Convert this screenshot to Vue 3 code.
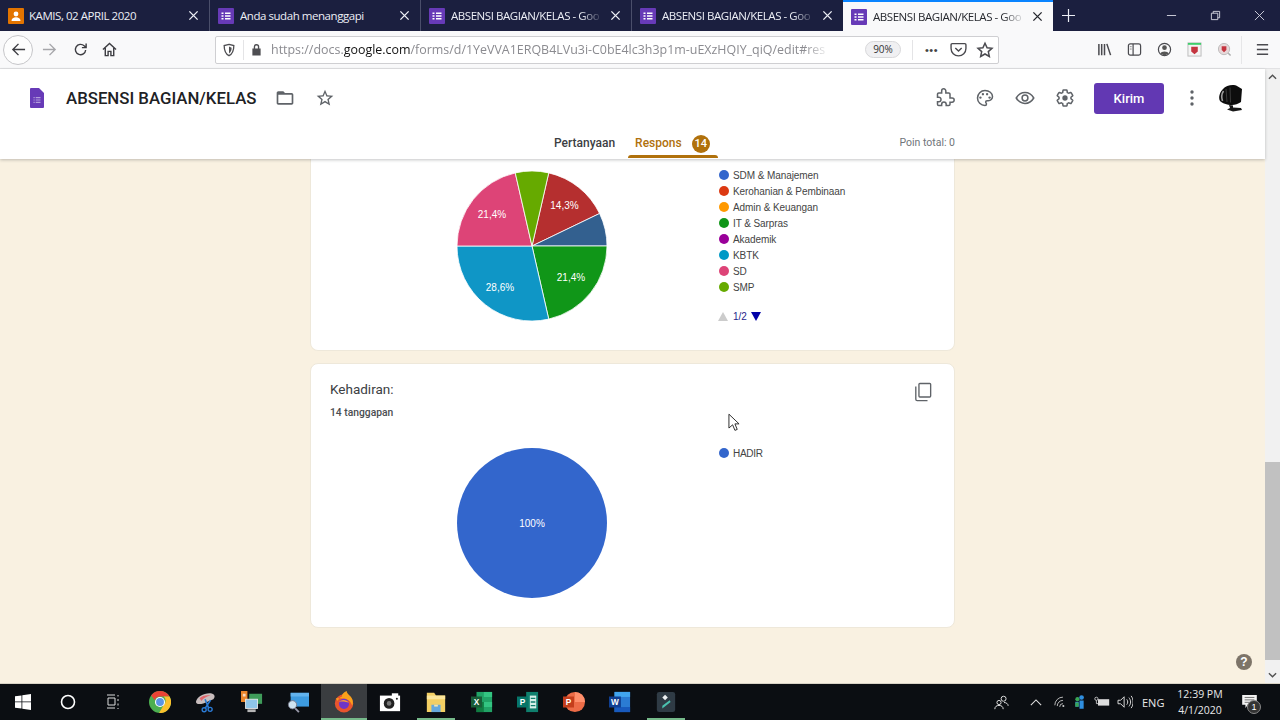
<template>
  <div class="screen">
    <!-- browser tabs -->
    <div class="tabbar">
      <div v-for="tab in tabs" :key="tab.id" :class="['tab', { active: tab.active }]">
        <svg v-if="tab.classroom" class="favicon" viewBox="0 0 16 16">
          <rect width="16" height="16" rx="1" fill="#e37400" />
          <circle cx="8" cy="6" r="2.4" fill="#fff" />
          <path d="M3.5 13c0-2.6 2-3.8 4.500-3.800s4.500 1.200 4.500 3.800z" fill="#fff" />
        </svg>
        <svg v-else class="favicon" viewBox="0 0 16 16">
          <rect width="16" height="16" rx="1" fill="#673ab7" />
          <path d="M3.500 4.500h2v1.500h-2zM7 4.500h5.500v1.500H7zM3.500 7.300h2v1.500h-2zM7 7.300h5.500v1.500H7zM3.500 10h2v1.500h-2zM7 10h5.500v1.500H7z" fill="#fff" />
        </svg>
        <span class="tab-title">{{ tab.title }}</span>
        <svg class="tab-close" viewBox="0 0 12 12">
          <path d="M1.500 1.500l9 9M10.500 1.500l-9 9" />
        </svg>
      </div>
      <svg class="new-tab" viewBox="0 0 14 14"><path d="M7 0v14M0 7h14" /></svg>
      <div class="window-btns">
        <svg viewBox="0 0 12 12"><path d="M1 6h10" /></svg>
        <svg viewBox="0 0 12 12"><path d="M1.500 3.500h7v7h-7zM3.500 3.500v-2h7v7h-2" /></svg>
        <svg viewBox="0 0 12 12"><path d="M1 1l10 10M11 1L1 11" /></svg>
      </div>
    </div>

    <!-- browser toolbar -->
    <div class="toolbar">
      <div class="nav-btns">
        <span class="back-btn">
          <svg viewBox="0 0 16 16"><path d="M15 8H2M8 2L2 8l6 6" /></svg>
        </span>
        <svg class="nav-icon fwd" viewBox="0 0 16 16"><path d="M1 8h13M8 2l6 6-6 6" /></svg>
        <svg class="nav-icon" viewBox="0 0 16 16"><path d="M13.500 8.500a5.500 5.500 0 1 1-1.600-4.400L14 6M14 1.500V6H9.500" /></svg>
        <svg class="nav-icon home" viewBox="0 0 16 16"><path d="M1 8l7-6.500L15 8M3.500 6.500V14.500h3V10h3v4.500h3V6.500" /></svg>
      </div>
      <div class="urlbar">
        <svg class="shield" viewBox="0 0 16 16"><path d="M8 1.500l5.500 1.500c0 5-1 9-5.500 11.500C3.500 12 2.500 8 2.500 3z" /><path class="shield-in" d="M8 4v8c2.200-1.500 3-3.500 3-6.500z" /></svg>
        <span class="url-sep"></span>
        <svg class="lock" viewBox="0 0 12 14"><path d="M3 6V4a3 3 0 0 1 6 0v2h1.500v7.500h-9V6zM4.500 6h3V4a1.500 1.500 0 0 0-3 0z" /></svg>
        <span class="url-text">https://docs.<b>google.com</b>/forms/d/1YeVVA1ERQB4LVu3i-C0bE4lc3h3p1m-uEXzHQIY_qiQ/edit#res</span>
        <span class="zoom-pill">90%</span>
        <span class="url-sep wide"></span>
        <span class="dots">•••</span>
        <svg class="url-icon" viewBox="0 0 16 16"><path class="line" d="M2 2.500h12a1 1 0 0 1 1 1V7a7 7 0 0 1-14 0V3.500a1 1 0 0 1 1-1zM5 6.500l3 3 3-3" /></svg>
        <svg class="url-icon star-url" viewBox="0 0 24 24"><path class="line2" d="M12 3l2.800 6 6.500.7-4.900 4.400 1.400 6.500L12 17.300l-5.800 3.300 1.400-6.500-4.900-4.400L9.200 9z" /></svg>
      </div>
      <div class="tool-right">
        <svg viewBox="0 0 16 16"><path class="line thick" d="M2 2v12M5 2v12M8 2v12M10.500 2l4 12" /></svg>
        <svg viewBox="0 0 16 16"><rect class="line" x="1.500" y="2" width="13" height="12" rx="2" /><path class="line" d="M6.500 2v12" /><path d="M3 5h2M3 7.500h2" stroke="#888" /></svg>
        <svg viewBox="0 0 16 16"><circle class="line" cx="8" cy="8" r="6.500" /><circle cx="8" cy="6" r="2.500" fill="#555" /><path d="M3.500 12.500c1-3 8-3 9 0L8 14.500z" fill="#555" /></svg>
        <svg viewBox="0 0 16 16"><rect x="1" y="1" width="14" height="14" fill="#f4f4f4" stroke="#bbb" /><path d="M1 1h14v2H1z" fill="#3ecf6b" /><path d="M4.500 5h7v5l-3.500 3-3.500-3z" fill="#c4343f" /></svg>
        <svg viewBox="0 0 16 16"><circle cx="7.500" cy="7.500" r="6" fill="#e8d9da" stroke="#bbb" /><path d="M5 4.500h5v4l-2.500 2.500L5 8.500z" fill="#c4343f" /><path d="M12 12l2.500 2.500" stroke="#aaa" stroke-width="1.500" /></svg>
        <span class="tool-sep"></span>
        <svg viewBox="0 0 16 16"><path class="line thick" d="M2 3h12M2 8h12M2 13h12" /></svg>
      </div>
    </div>

    <div class="page-wrap">
      <div class="page">
        <!-- forms header -->
        <header class="form-header">
          <div class="title-row">
            <svg class="doc-icon" viewBox="0 0 14 20">
              <path d="M1 0h8l5 5v14a1 1 0 0 1-1 1H1a1 1 0 0 1-1-1V1a1 1 0 0 1 1-1z" fill="#673ab7" />
              <path d="M3.500 9h1.200v1.200H3.500zM5.700 9h4.800v1.200H5.700zM3.500 11.400h1.200v1.200H3.500zM5.700 11.400h4.800v1.200H5.700zM3.500 13.800h1.200V15H3.500zM5.700 13.800h4.800V15H5.700z" fill="#b39ddb" />
            </svg>
            <h1>ABSENSI BAGIAN/KELAS</h1>
            <svg class="head-icon folder" viewBox="0 0 24 24"><path d="M20 6h-8l-2-2H4c-1.100 0-1.990.9-1.990 2L2 18c0 1.100.9 2 2 2h16c1.100 0 2-.9 2-2V8c0-1.100-.9-2-2-2zm0 12H4V8h16v10z" /></svg>
            <svg class="head-icon star" viewBox="0 0 24 24"><path d="M22 9.240l-7.190-.62L12 2 9.190 8.630 2 9.240l5.460 4.730L5.820 21 12 17.270 18.180 21l-1.630-7.030L22 9.240zM12 15.400l-3.760 2.270 1-4.280-3.320-2.880 4.380-.38L12 6.100l1.710 4.040 4.380.38-3.320 2.880 1 4.280L12 15.400z" /></svg>
            <div class="head-actions">
              <svg class="head-icon outline" viewBox="0 0 24 24"><path d="M20.500 12H18V7.500a1.500 1.500 0 0 0-1.500-1.500H13V3.500a2.500 2.500 0 0 0-5 0V6H4.500A1.500 1.500 0 0 0 3 7.500V11h1.500a2.700 2.700 0 0 1 0 5.400H3v3.100A1.500 1.500 0 0 0 4.500 21H8v-1.500a2.700 2.700 0 0 1 5.400 0V21h3.100a1.500 1.500 0 0 0 1.500-1.500V17h2.500a2.500 2.500 0 0 0 0-5z" /></svg>
              <svg class="head-icon outline" viewBox="0 0 24 24"><path d="M12 3a9 9 0 0 0 0 18c1 0 1.800-.8 1.800-1.700 0-.5-.2-.9-.5-1.200-.3-.3-.5-.7-.5-1.200 0-1 .8-1.700 1.700-1.700H16a5 5 0 0 0 5-5c0-3.900-4-7.200-9-7.200z" /><g class="palette-dots"><circle cx="6.500" cy="11.500" r="1.400" /><circle cx="9.500" cy="7.500" r="1.400" /><circle cx="14.500" cy="7.500" r="1.400" /><circle cx="17.500" cy="11.500" r="1.400" /></g></svg>
              <svg class="head-icon outline" viewBox="0 0 24 24"><path d="M1.500 12C4 7.800 7.700 5.500 12 5.500s8 2.300 10.500 6.500C20 16.200 16.300 18.500 12 18.500S4 16.200 1.500 12z" /><circle cx="12" cy="12" r="3.500" /></svg>
              <svg class="head-icon outline" viewBox="0 0 24 24"><path d="M19.140 12.940c.04-.3.06-.61.06-.94 0-.32-.02-.64-.07-.94l2.030-1.580c.18-.14.23-.41.12-.61l-1.920-3.320c-.12-.22-.37-.29-.59-.22l-2.390.96c-.5-.38-1.030-.7-1.620-.94l-.36-2.540c-.04-.24-.24-.41-.48-.41h-3.840c-.24 0-.43.17-.47.41l-.36 2.540c-.59.24-1.130.57-1.620.94l-2.390-.96c-.22-.08-.47 0-.59.22L2.740 8.870c-.12.21-.08.47.12.61l2.030 1.580c-.05.3-.09.63-.09.94s.02.64.07.94l-2.030 1.580c-.18.14-.23.41-.12.61l1.920 3.320c.12.22.37.29.59.22l2.390-.96c.5.38 1.030.7 1.620.94l.36 2.540c.05.24.24.41.48.41h3.840c.24 0 .44-.17.47-.41l.36-2.540c.59-.24 1.130-.56 1.620-.94l2.390.96c.22.08.47 0 .59-.22l1.920-3.320c.12-.22.07-.47-.12-.61l-2.010-1.580z" /><circle class="gear-hub" cx="12" cy="12" r="3.200" /></svg>
              <button class="send-btn">Kirim</button>
              <svg class="more" viewBox="0 0 4 18"><circle cx="2" cy="3" r="1.700" /><circle cx="2" cy="9" r="1.700" /><circle cx="2" cy="15" r="1.700" /></svg>
              <svg class="avatar" viewBox="0 0 26 28">
                <path d="M6 5c3-4 11-5 14-3l5 3 -1 13c-3 2-6 3-9 3-5 0-10-2-12-4C1 13 3 8 6 5z" fill="#0d0d0d" />
                <path d="M6.500 7C4.500 10 4.500 14 5.500 17" stroke="#9a9a9a" stroke-width="1.600" fill="none" />
                <path d="M9 5l1 13M13 3.500l.5 15" stroke="#3a3a3a" stroke-width="1" fill="none" />
                <path d="M12 21l4 .5v2l8 .5 1 2-9 1.500-6-2 3-1.500z" fill="#181818" />
              </svg>
            </div>
          </div>
          <nav class="form-tabs">
            <span class="form-tab">Pertanyaan</span>
            <span class="form-tab current">Respons <em class="badge">14</em></span>
            <span class="points">Poin total: 0</span>
          </nav>
        </header>

        <div class="cards">
          <section class="card card-cut">
            <div class="chart-row">
              <svg class="pie" viewBox="0 0 150 150">
                <path v-for="s in slices" :key="s.color" :d="s.d" :fill="s.color" stroke="#fff" stroke-width="0.800" />
                <text v-for="l in pieLabels" :key="l.text + l.x" :x="l.x" :y="l.y" class="pie-label">{{ l.text }}</text>
              </svg>
              <div class="legend-col">
                <div v-for="item in legend" :key="item.name" class="legend-item">
                  <i class="dot" :style="{ background: item.color }"></i>{{ item.name }}
                </div>
                <div class="pager">
                  <i class="tri-up"></i><span>1/2</span><i class="tri-down"></i>
                </div>
              </div>
            </div>
          </section>

          <section class="card card-two">
            <div class="card-top">
              <div>
                <h2>Kehadiran:</h2>
                <p>14 tanggapan</p>
              </div>
              <svg class="copy-icon" viewBox="0 0 20 22">
                <path d="M6.500 1.500h11a1 1 0 0 1 1 1v13a1 1 0 0 1-1 1h-11a1 1 0 0 1-1-1v-13a1 1 0 0 1 1-1z" />
                <path d="M2 5v14a1.500 1.500 0 0 0 1.500 1.500H15" />
              </svg>
            </div>
            <div class="chart-row second">
              <svg class="pie" viewBox="0 0 150 150">
                <circle cx="75" cy="75" r="75" fill="#3366cc" />
                <text x="75" y="78.500" class="pie-label">100%</text>
              </svg>
              <div class="legend-col">
                <div class="legend-item hadir"><i class="dot" style="background: #3366cc"></i>HADIR</div>
              </div>
            </div>
          </section>
        </div>

        <svg class="cursor" viewBox="0 0 13 20"><path d="M1 1v15l4-3.500 2.500 6 2.500-1-2.500-6H12z" /></svg>
        <span class="help">?</span>
      </div>

      <div class="scrollbar">
        <svg viewBox="0 0 10 6"><path d="M1 5l4-4 4 4" /></svg>
        <div class="scroll-track"><div class="scroll-thumb"></div></div>
        <svg viewBox="0 0 10 6"><path d="M1 1l4 4 4-4" /></svg>
      </div>
    </div>

    <!-- windows taskbar -->
    <footer class="taskbar">
      <div class="task-icons">
        <span class="task small"><svg viewBox="0 0 16 16"><path d="M0 2.300L6.500 1.400V7.500H0zM7.300 1.300L16 0v7.500H7.300zM0 8.300h6.500v6.300L0 13.700zM7.300 8.300H16V16l-8.700-1.200z" fill="#fff" /></svg></span>
        <span class="task small"><svg viewBox="0 0 16 16"><circle cx="8" cy="8" r="6.500" fill="none" stroke="#fff" stroke-width="1.600" /></svg></span>
        <span class="task small"><svg viewBox="0 0 16 16"><path d="M2 1h8M3 4h7v7H3zM2 14h8M13 1v1.500M13 5v2M13 9.500v2M13 14v1" fill="none" stroke="#ddd" /></svg></span>
        <span class="task"><svg viewBox="0 0 24 24"><circle cx="12" cy="12" r="12" fill="#4caf50" /><path d="M12 0a12 12 0 0 1 10.400 6H12a6 6 0 0 0-5.700 4L2.400 4.800A12 12 0 0 1 12 0z" fill="#ea4335" /><path d="M22.400 6A12 12 0 0 1 11 24l5.200-9a6 6 0 0 0-.2-9z" fill="#fbc02d" /><circle cx="12" cy="12" r="5.500" fill="#fff" /><circle cx="12" cy="12" r="4.300" fill="#5a95e6" /></svg></span>
        <span class="task"><svg viewBox="0 0 24 24"><path d="M1 12C2 6 12 1 19 3c3 1 3 4 1 6l-7 3c-4 2-11 4-12 0z" fill="#c8bdbd" /><path d="M5 8c3-3 8-4 12-3-4 1-8 3-10 6z" fill="#e0656c" /><path d="M11 9l4 10M17 10l-6 9" stroke="#2b7bd6" stroke-width="1.800" /><circle cx="16.500" cy="20" r="2.200" fill="none" stroke="#2b7bd6" stroke-width="1.500" /><circle cx="10" cy="20.500" r="2.200" fill="none" stroke="#2b7bd6" stroke-width="1.500" /></svg></span>
        <span class="task"><svg viewBox="0 0 24 24"><rect x="0" y="0" width="7" height="12" fill="#e8852b" /><path d="M2 3h3v3H2z" fill="#fff" opacity=".7" /><rect x="9" y="3" width="14" height="11" fill="#3f9c5a" /><rect x="5" y="9" width="13" height="10" fill="#8fc5e8" stroke="#e8e8e8" /><path d="M7 20h9v3H7z" fill="#b5b5b5" /></svg></span>
        <span class="task"><svg viewBox="0 0 24 24"><rect x="4" y="2" width="20" height="15" fill="#3d9be0" /><path d="M4 2h20v4H4z" fill="#62b3ee" /><circle cx="6" cy="15" r="4.500" fill="#cfe3f0" stroke="#778" /><path d="M9 19l4 4" stroke="#99a" stroke-width="2" /></svg></span>
        <span class="task running on"><svg viewBox="0 0 24 24"><circle cx="12" cy="13.500" r="10" fill="#e8542e" /><path d="M3 8c1 1 1.500 2 2 3 1-2 2-4 5-5-1-2 2-5 5-6 0 3 3 4 5 7 2 3 2 6 1 9-2-6-6-9-18-8z" fill="#f9a11b" /><circle cx="12" cy="14" r="5.500" fill="#6e35c9" /><path d="M6.500 12c3-3 8-3 11 1-3-1-7-2-11-1z" fill="#ff9a2e" /></svg></span>
        <span class="task"><svg viewBox="0 0 24 24"><path d="M1 5h22v17H1z" fill="#fff" /><path d="M14 2.500h7V6h-7z" fill="#fff" /><circle cx="11" cy="13.500" r="5.800" fill="#222" /><circle cx="11" cy="13.500" r="2.500" fill="#777" /><circle cx="19.500" cy="8.500" r="1.100" fill="#222" /></svg></span>
        <span class="task running"><svg viewBox="0 0 24 24"><path d="M2 2h8l2 3h10v18H2z" fill="#f3cf63" /><path d="M2 5h20v4H2z" fill="#fbe59a" /><path d="M7 15h10v8H7z" fill="#66a9dc" /><path d="M10 15h4v2h-4z" fill="#f3e6b4" /></svg></span>
        <span class="task"><svg viewBox="0 0 24 24"><rect x="6" y="1" width="17" height="22" fill="#21a366" /><path d="M14 1h9v5.500h-9zM14 12h9v5.500h-9z" fill="#33c481" /><path d="M6 12h8v11H6z" fill="#107c41" /><rect x="0" y="6" width="12" height="12" fill="#185c37" /><text x="6" y="15.500" class="app-letter">X</text></svg></span>
        <span class="task"><svg viewBox="0 0 24 24"><path d="M10 1h13v22H10z" fill="#0f7f6d" /><path d="M14 5h7v14h-7z" fill="#d6efe8" /><path d="M15 8h5M15 12h5M15 16h5" stroke="#0f7f6d" stroke-width="1.500" /><rect x="0" y="6" width="12" height="12" fill="#077568" /><text x="6" y="15.500" class="app-letter">P</text></svg></span>
        <span class="task"><svg viewBox="0 0 24 24"><circle cx="13" cy="12" r="11" fill="#ed6c47" /><path d="M13 1a11 11 0 0 1 11 11H13z" fill="#ff8f6b" /><rect x="0" y="6" width="12" height="12" fill="#c43e1c" /><text x="6" y="15.500" class="app-letter">P</text></svg></span>
        <span class="task"><svg viewBox="0 0 24 24"><rect x="6" y="1" width="17" height="22" fill="#2b7cd3" /><path d="M6 1h17v5.500H6z" fill="#41a5ee" /><path d="M6 17.500h17V23H6z" fill="#185abd" /><rect x="0" y="6" width="13" height="12" fill="#103f91" /><text x="6.500" y="15.500" class="app-letter">W</text></svg></span>
        <span class="task running last"><svg viewBox="0 0 24 24"><rect x="2" y="1" width="20" height="22" rx="2.500" fill="#2f3b45" /><path d="M11 4l3 3-3 3-3-3z" fill="#eef2f4" /><path d="M8 19l9-7-1-2-8 6z" fill="#4bc2b0" /></svg></span>
      </div>
      <div class="tray">
        <svg class="tray-people" viewBox="0 0 18 18"><circle cx="11.500" cy="4.500" r="3" /><circle cx="6" cy="9" r="2.500" /><path d="M1 17c0-3 2-4.500 5-4.500s5 1.500 5 4.500M12 9c2.500 0 5 1.500 5 4" /></svg>
        <svg class="tray-chev" viewBox="0 0 14 8"><path d="M1 7l6-6 6 6" /></svg>
        <svg class="tray-wifi" viewBox="0 0 16 14"><path d="M1 11A10 10 0 0 1 11 1M4 12a7 7 0 0 1 7-7M7 13a4 4 0 0 1 4-4" /><circle cx="11.500" cy="12" r="1.300" fill="#ccc" stroke="none" /></svg>
        <svg class="tray-app" viewBox="0 0 12 18"><circle cx="3.500" cy="5" r="2.500" fill="#3aa655" /><circle cx="8.500" cy="3" r="2.800" fill="#2f8fe0" /><path d="M1 8h4v6H1zM6 6.500h5v10H6z" fill="#2f8fe0" /><path d="M1 9h4v5H1z" fill="#3aa655" /></svg>
        <svg class="tray-batt" viewBox="0 0 20 14"><rect x="5" y="3.500" width="14" height="8" fill="#ddd" /><circle cx="3" cy="3" r="2" fill="none" stroke="#ddd" /><path d="M3 5v4h3" fill="none" stroke="#ddd" /></svg>
        <svg class="tray-vol" viewBox="0 0 18 16"><path d="M1 6h3l4-4v12l-4-4H1zM11 5c1.500 2 1.500 4 0 6M13.500 3c2.500 3 2.500 7 0 10M16 1c3 4 3 10 0 14" /></svg>
        <span class="tray-lang">ENG</span>
        <div class="clock"><span>12:39 PM</span><span>4/1/2020</span></div>
        <div class="notif">
          <svg viewBox="0 0 18 16"><path d="M0 0h18v12H7l-3 4v-4H0z" fill="#f2f2f2" /><path d="M3 3h12M3 6h12M3 9h8" stroke="#555" /></svg>
          <span class="notif-count">1</span>
        </div>
      </div>
    </footer>
  </div>
</template>

<script setup>
const tabs = [
  { id: 1, title: 'KAMIS, 02 APRIL 2020', classroom: true },
  { id: 2, title: 'Anda sudah menanggapi' },
  { id: 3, title: 'ABSENSI BAGIAN/KELAS - Goo' },
  { id: 4, title: 'ABSENSI BAGIAN/KELAS - Goo' },
  { id: 5, title: 'ABSENSI BAGIAN/KELAS - Goo', active: true }
]

const legend = [
  { name: 'SDM & Manajemen', color: '#3366cc' },
  { name: 'Kerohanian & Pembinaan', color: '#dc3912' },
  { name: 'Admin & Keuangan', color: '#ff9900' },
  { name: 'IT & Sarpras', color: '#109618' },
  { name: 'Akademik', color: '#990099' },
  { name: 'KBTK', color: '#0099c6' },
  { name: 'SD', color: '#dd4477' },
  { name: 'SMP', color: '#66aa00' }
]

// clockwise from 12 o'clock, the first slice starts a bit past the top
const wedge = (from, to) => {
  const r = 75
  const pt = (deg) => {
    const a = (deg * Math.PI) / 180
    return `${(75 + r * Math.sin(a)).toFixed(2)} ${(75 - r * Math.cos(a)).toFixed(2)}`
  }
  return `M75 75L${pt(from)}A${r} ${r} 0 ${to - from > 180 ? 1 : 0} 1 ${pt(to)}Z`
}

const slices = [
  { color: '#b52f2f', d: wedge(12.9, 64.3) },
  { color: '#33608f', d: wedge(64.3, 90) },
  { color: '#109618', d: wedge(90, 167.1) },
  { color: '#0f96c6', d: wedge(167.1, 270) },
  { color: '#dd4477', d: wedge(270, 347.1) },
  { color: '#66aa00', d: wedge(347.1, 372.9) }
]

const pieLabels = [
  { text: '14,3%', x: 107.5, y: 38 },
  { text: '21,4%', x: 114, y: 110 },
  { text: '28,6%', x: 43, y: 119.5 },
  { text: '21,4%', x: 35, y: 47 }
]
</script>

<style scoped>
.screen {
  width: 1280px;
  height: 720px;
  display: flex;
  flex-direction: column;
  overflow: hidden;
  font-family: "Liberation Sans", Arial, sans-serif;
  background: #f9f1e1;
}

/* browser tabs */
.tabbar {
  height: 31px;
  flex: none;
  display: flex;
  align-items: stretch;
  background: #1b1f3f;
  color: #eceef5;
}
.tab {
  width: 211px;
  box-sizing: border-box;
  display: flex;
  align-items: center;
  padding: 0 10px 0 8px;
  border-right: 1px solid #4a4e6a;
  font-family: "Open Sans", sans-serif;
  font-size: 11.5px;
  letter-spacing: -0.45px;
}
.tab:first-child {
  width: 210px;
}
.tab:nth-child(4) {
  border-right: none;
}
.tab.active {
  width: 210px;
  background: #f9f9fa;
  color: #26282e;
  border-right: none;
  border-top: 2px solid #0a84ff;
}
.favicon {
  width: 16px;
  height: 16px;
  flex: none;
  margin-right: 6px;
}
.tab:first-child .favicon {
  margin-right: 5px;
}
.tab-title {
  flex: 1;
  overflow: hidden;
  white-space: nowrap;
  -webkit-mask-image: linear-gradient(to left, transparent 0, #000 22px);
  mask-image: linear-gradient(to left, transparent 0, #000 22px);
}
.tab:nth-child(-n+2) .tab-title {
  -webkit-mask-image: none;
  mask-image: none;
}
.tab-close {
  width: 11px;
  height: 11px;
  flex: none;
  margin-left: 7px;
  fill: none;
  stroke: currentColor;
  stroke-width: 1.500;
}
.new-tab {
  width: 13px;
  height: 13px;
  margin: 9px 0 0 9px;
  fill: none;
  stroke: #eceef5;
  stroke-width: 1.300;
}
.window-btns {
  margin-left: auto;
  display: flex;
  align-items: center;
  gap: 33px;
  padding-right: 15px;
}
.window-btns svg {
  width: 11px;
  height: 11px;
  fill: none;
  stroke: #d6d8e2;
}

/* toolbar */
.toolbar {
  height: 38px;
  flex: none;
  box-sizing: border-box;
  display: flex;
  align-items: center;
  background: #f9f9fa;
  border-bottom: 1px solid #e2e2e4;
}
.nav-btns {
  width: 215px;
  flex: none;
  display: flex;
  align-items: center;
  padding-left: 3px;
  box-sizing: border-box;
}
.back-btn {
  width: 30px;
  height: 30px;
  box-sizing: border-box;
  border: 1px solid #c6c6c9;
  border-radius: 50%;
  display: flex;
  align-items: center;
  justify-content: center;
  background: #fdfdfd;
}
.back-btn svg,
.nav-icon {
  width: 15px;
  height: 15px;
  fill: none;
  stroke: #3d3d42;
  stroke-width: 1.500;
}
.nav-icon {
  margin-left: 16px;
}
.nav-icon.fwd {
  margin-left: 9px;
  stroke: #a6a6aa;
}
.nav-icon.home {
  margin-left: 14px;
}
.urlbar {
  width: 784px;
  height: 28px;
  box-sizing: border-box;
  display: flex;
  align-items: center;
  background: #fff;
  border: 1px solid #cfcfd2;
  border-radius: 2px;
  padding-left: 6px;
}
.shield {
  width: 14px;
  height: 14px;
  flex: none;
  fill: none;
  stroke: #4e4e52;
  stroke-width: 1.500;
}
.shield-in {
  fill: #4e4e52;
  stroke: none;
}
.url-sep {
  width: 1px;
  height: 20px;
  background: #e4e4e6;
  margin: 0 7px 0 7px;
  flex: none;
}
.url-sep.wide {
  margin: 0 11px 0 11px;
}
.lock {
  width: 11px;
  height: 13px;
  flex: none;
  fill: #4e4e52;
  fill-rule: evenodd;
  margin-right: 9px;
}
.url-text {
  width: 559px;
  flex: none;
  overflow: hidden;
  white-space: nowrap;
  font-family: "Open Sans", sans-serif;
  font-size: 12.450px;
  color: #8b8b90;
  -webkit-mask-image: linear-gradient(to left, transparent 0, #000 26px);
  mask-image: linear-gradient(to left, transparent 0, #000 26px);
}
.url-text b {
  font-weight: 400;
  color: #111;
}
.zoom-pill {
  margin-left: 35px;
  width: 36px;
  height: 17px;
  flex: none;
  box-sizing: border-box;
  border: 1px solid #d8d8da;
  border-radius: 9px;
  background: #f0f0f2;
  font-family: "Open Sans", sans-serif;
  font-size: 10px;
  line-height: 15px;
  text-align: center;
  color: #333;
}
.dots {
  font-size: 11px;
  letter-spacing: 0.500px;
  color: #444;
  margin-right: 12px;
  margin-left: 1px;
}
.url-icon {
  width: 17px;
  height: 17px;
  flex: none;
  margin-right: 9px;
}
.star-url {
  width: 18px;
  height: 18px;
}
.line {
  fill: none;
  stroke: #4a4a4f;
  stroke-width: 1.300;
}
.line.thick {
  stroke-width: 1.600;
}
.line2 {
  fill: none;
  stroke: #4a4a4f;
  stroke-width: 2;
}
.tool-right {
  flex: 1;
  display: flex;
  align-items: center;
  gap: 15px;
  padding-left: 98px;
}
.tool-right svg {
  width: 15px;
  height: 15px;
  flex: none;
}
.tool-sep {
  width: 1px;
  height: 28px;
  background: #e6e6e8;
  margin: 0 -2px 0 -6px;
}

/* page area */
.page-wrap {
  flex: 1;
  min-height: 0;
  display: flex;
}
.page {
  flex: 1;
  min-width: 0;
  position: relative;
  display: flex;
  flex-direction: column;
}
.form-header {
  height: 90px;
  flex: none;
  box-sizing: border-box;
  background: #fff;
  box-shadow: 0 1px 3px rgba(60, 64, 67, 0.3);
  position: relative;
  z-index: 1;
}
.title-row {
  height: 58px;
  display: flex;
  align-items: center;
  padding-left: 30px;
  padding-top: 0;
}
.doc-icon {
  width: 14px;
  height: 20px;
  flex: none;
}
h1 {
  margin: 0 0 0 22px;
  font-family: Roboto, sans-serif;
  font-size: 16.800px;
  font-weight: 500;
  color: #202124;
}
.head-icon {
  width: 20px;
  height: 20px;
  flex: none;
  fill: #5f6368;
}
.folder {
  margin-left: 19px;
}
.star {
  margin-left: 20px;
}
.head-icon.outline {
  fill: none;
  stroke: #5f6368;
  stroke-width: 1.800;
}
.palette-dots {
  fill: #5f6368;
  stroke: none;
}
.head-icon .gear-hub {
  fill: #5f6368;
  stroke: none;
}
.head-actions {
  margin-left: auto;
  display: flex;
  align-items: center;
  gap: 20px;
  padding-right: 22px;
}
.send-btn {
  width: 70px;
  height: 31px;
  margin-left: -1px;
  border: none;
  border-radius: 3px;
  background: #6238b3;
  color: #fff;
  font-family: Roboto, sans-serif;
  font-size: 13px;
  font-weight: 500;
}
.more {
  width: 4px;
  height: 18px;
  margin-left: 6px;
  fill: #5f6368;
}
.avatar {
  width: 26px;
  height: 28px;
  margin-left: 3px;
}
.form-tabs {
  height: 32px;
  display: flex;
  align-items: flex-start;
  padding-left: 554px;
  font-family: Roboto, sans-serif;
  font-size: 12px;
  font-weight: 500;
  color: #3c4043;
}
.form-tab {
  height: 15px;
  line-height: 15px;
  margin-top: 9px;
}
.form-tab.current {
  color: #b0710c;
  margin-left: 20px;
  position: relative;
  display: flex;
  align-items: center;
  gap: 10px;
}
.form-tab.current::after {
  content: "";
  position: absolute;
  left: -7px;
  right: -8px;
  top: 19px;
  height: 3px;
  border-radius: 3px 3px 0 0;
  background: #b0710c;
}
.badge {
  width: 18px;
  height: 18px;
  flex: none;
  border-radius: 50%;
  background: #b0710c;
  color: #fff;
  font-style: normal;
  font-size: 11px;
  line-height: 18px;
  text-align: center;
}
.points {
  margin: 8px 0 0 auto;
  padding-right: 310px;
  line-height: 15px;
  font-size: 10.500px;
  font-weight: 400;
  color: #70757a;
}

/* response cards */
.cards {
  flex: 1;
  min-height: 0;
  display: flex;
  flex-direction: column;
  gap: 12px;
  padding-left: 310px;
}
.card {
  width: 645px;
  box-sizing: border-box;
  background: #fff;
  border: 1px solid #eee8da;
  border-radius: 8px;
}
.card-cut {
  height: 192px;
  border-top: none;
  border-radius: 0 0 8px 8px;
}
.card-two {
  height: 265px;
  padding: 17px 20px 0 19px;
  position: relative;
}
.chart-row {
  display: grid;
  grid-template-columns: 407px 1fr;
  padding-top: 12px;
}
.chart-row.second {
  margin: 1px -20px 0 -19px;
  padding-top: 0;
}
.pie {
  width: 150px;
  height: 150px;
  margin-left: 146px;
  display: block;
  overflow: visible;
}
.pie-label {
  font-family: "Liberation Sans", Arial, sans-serif;
  font-size: 10px;
  fill: #fff;
  text-anchor: middle;
}
.legend-col {
  display: flex;
  flex-direction: column;
  margin-top: -4px;
}
.legend-item {
  height: 16px;
  display: flex;
  align-items: center;
  font-size: 10px;
  letter-spacing: -0.08px;
  color: #444;
}
.legend-item.hadir {
  margin-top: 1px;
  letter-spacing: -0.3px;
}
.dot {
  width: 10px;
  height: 10px;
  flex: none;
  border-radius: 50%;
  margin-right: 4px;
  margin-left: 1px;
}
.pager {
  display: flex;
  align-items: center;
  margin-top: 14px;
  height: 14px;
  font-size: 10px;
  color: #1f1f8c;
}
.tri-up {
  width: 0;
  height: 0;
  margin: 0 5px 0 0;
  border: 5px solid transparent;
  border-top: none;
  border-bottom: 9px solid #cccccc;
}
.tri-down {
  width: 0;
  height: 0;
  margin-left: 4px;
  border: 5px solid transparent;
  border-bottom: none;
  border-top: 9px solid #0000a8;
}
.card-top {
  display: flex;
  justify-content: space-between;
  align-items: flex-start;
  height: 66px;
}
h2 {
  margin: 0;
  font-family: Roboto, sans-serif;
  font-size: 13.500px;
  font-weight: 400;
  line-height: 16px;
  color: #3c4043;
}
.card-top p {
  margin: 9px 0 0;
  font-family: Roboto, sans-serif;
  font-size: 10.300px;
  font-weight: 500;
  line-height: 14px;
  color: #4a4d51;
}
.copy-icon {
  width: 18px;
  height: 20px;
  margin: 1px 2px 0 0;
  fill: none;
  stroke: #5f6368;
  stroke-width: 1.500;
}
.cursor {
  position: absolute;
  left: 728px;
  top: 344px;
  width: 12px;
  height: 19px;
  fill: #fff;
  stroke: #222;
  stroke-width: 1;
}
.help {
  position: absolute;
  left: 1236px;
  top: 585px;
  width: 16px;
  height: 16px;
  border-radius: 50%;
  background: #7d7468;
  color: #fff;
  font-size: 12px;
  font-weight: 700;
  line-height: 16px;
  text-align: center;
}
.scrollbar {
  width: 15px;
  flex: none;
  display: flex;
  flex-direction: column;
  align-items: center;
  background: #f1f1f1;
}
.scrollbar svg {
  width: 9px;
  height: 6px;
  flex: none;
  margin: 5px 0;
  fill: none;
  stroke: #505050;
  stroke-width: 1.500;
}
.scroll-track {
  flex: 1;
  width: 100%;
}
.scroll-thumb {
  height: 198px;
  margin-top: 377px;
  background: #c1c1c1;
}

/* taskbar */
.taskbar {
  height: 37px;
  flex: none;
  display: flex;
  align-items: center;
  background: #0b0e12;
  border-top: 1px solid #d9d3c5;
  box-sizing: border-box;
}
.task-icons {
  display: flex;
  padding-left: 0;
  height: 100%;
}
.task {
  width: 46px;
  height: 100%;
  display: flex;
  align-items: center;
  justify-content: center;
  box-sizing: border-box;
  position: relative;
}
.task svg {
  width: 22px;
  height: 22px;
}
.task.small {
  width: 45px;
}
.task.small svg {
  width: 16px;
  height: 16px;
}
.task.small:nth-child(3) {
  margin-right: 1.500px;
}
.task.on {
  background: #3a3d40;
}
.task.running::after {
  content: "";
  position: absolute;
  left: 4px;
  right: 4px;
  bottom: 0;
  height: 2px;
  background: #76b98a;
}
.task.on::after {
  left: 0;
  right: 0;
}
.app-letter {
  font-family: "Liberation Sans", Arial, sans-serif;
  font-size: 9px;
  font-weight: 700;
  fill: #fff;
  text-anchor: middle;
}
.tray {
  margin-left: auto;
  display: flex;
  align-items: center;
  color: #e8e8e8;
  padding-right: 23px;
}
.tray svg {
  flex: none;
}
.tray-people {
  width: 15px;
  height: 15px;
  fill: none;
  stroke: #ddd;
  stroke-width: 1.200;
  margin-right: 21px;
}
.tray-chev {
  width: 12px;
  height: 7px;
  fill: none;
  stroke: #ddd;
  stroke-width: 1.300;
  margin-right: 12px;
}
.tray-wifi {
  width: 13px;
  height: 12px;
  fill: none;
  stroke: #bbb;
  stroke-width: 1.200;
  margin-right: 7px;
}
.tray-app {
  width: 11px;
  height: 15px;
  margin-right: 9px;
}
.tray-batt {
  width: 16px;
  height: 12px;
  margin-right: 7px;
}
.tray-vol {
  width: 16px;
  height: 14px;
  fill: none;
  stroke: #ddd;
  stroke-width: 1.100;
  margin-right: 9px;
}
.tray-lang {
  font-family: "Open Sans", sans-serif;
  font-size: 11px;
  width: 34px;
}
.clock {
  width: 50px;
  margin-left: -1px;
  display: flex;
  flex-direction: column;
  align-items: center;
  font-family: "Open Sans", sans-serif;
  font-size: 10.500px;
  line-height: 16px;
}
.notif {
  position: relative;
  margin-left: 17px;
  width: 15px;
  height: 14px;
}
.notif svg {
  width: 15px;
  height: 13px;
  display: block;
}
.notif-count {
  position: absolute;
  left: 5px;
  top: 5px;
  width: 14px;
  height: 14px;
  border-radius: 50%;
  border: 1px solid #888;
  box-sizing: border-box;
  background: #333;
  font-size: 9px;
  line-height: 12px;
  text-align: center;
  color: #fff;
}
</style>

<style>
html, body {
  margin: 0;
  background: #f9f1e1;
}
</style>
